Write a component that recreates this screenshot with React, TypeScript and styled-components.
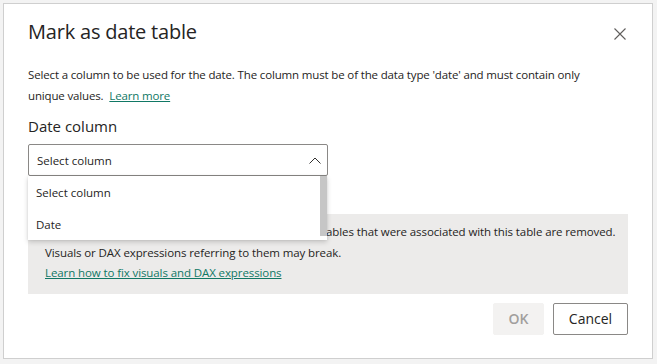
import React from "react";
import styled, { createGlobalStyle } from "styled-components";

const Global = createGlobalStyle`
  html, body { margin: 0; padding: 0; background: #f3f3f3; }
  body { font-family: "Segoe UI", "Open Sans", "Noto Sans", sans-serif; color: #252423; }
  * { box-sizing: border-box; }
`;

const Page = styled.div`
  padding: 3px;
`;

const Dialog = styled.div`
  width: 650px;
  height: 356px;
  background: #ffffff;
  border: 1px solid #cfcfcf;
  padding: 14px 24px 0 24px;
  display: flex;
  flex-direction: column;
`;

const Header = styled.div`
  display: flex;
  align-items: flex-start;
  justify-content: space-between;
`;

const Title = styled.h1`
  margin: 0;
  font-size: 20px;
  line-height: 28px;
  font-weight: 400;
  letter-spacing: -0.2px;
  color: #252423;
`;

const CloseButton = styled.button`
  border: 0;
  background: transparent;
  padding: 0;
  width: 12px;
  height: 12px;
  margin: 10px 2px 0 0;
  display: flex;
  color: #605e5c;
`;

const Description = styled.p`
  margin: 18px 0 0 0;
  font-size: 11.5px;
  letter-spacing: -0.15px;
  line-height: 21px;
  white-space: nowrap;
`;

const Link = styled.a`
  color: #117865;
  text-decoration: underline;
  text-underline-offset: 1px;
  padding-left: 3px;
`;

const Label = styled.div`
  margin-top: 10px;
  font-size: 15px;
  line-height: 20px;
`;

const SelectWrap = styled.div`
  position: relative;
  width: 300px;
  margin-top: 8px;
`;

const SelectBox = styled.div`
  height: 32px;
  border: 1px solid #8a8886;
  border-radius: 2px;
  display: flex;
  align-items: center;
  justify-content: space-between;
  padding: 0 6px 0 8px;
  font-size: 11.5px;
`;

const Dropdown = styled.div`
  position: absolute;
  top: 100%;
  left: 0;
  width: 299px;
  height: 64px;
  background: #ffffff;
  box-shadow: 0 2px 5px rgba(0, 0, 0, 0.18), 0 0 2px rgba(0, 0, 0, 0.08);
  display: flex;
  z-index: 2;
`;

const OptionList = styled.div`
  flex: 1;
  display: flex;
  flex-direction: column;
`;

const Option = styled.div`
  height: 32px;
  display: flex;
  align-items: center;
  padding-left: 8px;
  font-size: 11.5px;
`;

const Scrollbar = styled.div`
  width: 7px;
  height: 60px;
  background: #c6c6c6;
`;

const Warning = styled.div`
  margin-top: 38px;
  background: #ecebea;
  padding: 8px 6px 10px 17px;
  font-size: 11.5px;
  letter-spacing: -0.1px;
  line-height: 20.5px;
  white-space: nowrap;
`;

const WarningLink = styled.a`
  color: #117865;
  text-decoration: underline;
  text-underline-offset: 1px;
`;

const Footer = styled.div`
  margin-top: 9px;
  display: flex;
  justify-content: flex-end;
  gap: 9px;
`;

const Button = styled.button<{ $primary?: boolean }>`
  height: 32px;
  min-width: ${(p) => (p.$primary ? "51px" : "75px")};
  border-radius: 2px;
  font-family: inherit;
  font-size: 14px;
  font-weight: ${(p) => (p.$primary ? 600 : 400)};
  background: ${(p) => (p.$primary ? "#f3f2f1" : "#ffffff")};
  color: ${(p) => (p.$primary ? "#a19f9d" : "#252423")};
  border: ${(p) => (p.$primary ? "1px solid #f3f2f1" : "1px solid #8a8886")};
  padding: 0 12px;
`;

export default function App() {
  return (
    <Page>
      <Global />
      <Dialog>
        <Header>
          <Title>Mark as date table</Title>
          <CloseButton aria-label="Close">
            <svg width="12" height="12" viewBox="0 0 12 12">
              <path d="M0.5 0.5 L11.5 11.5 M11.5 0.5 L0.5 11.5" stroke="currentColor" strokeWidth="1.1" fill="none" />
            </svg>
          </CloseButton>
        </Header>
        <Description>
          Select a column to be used for the date. The column must be of the data type 'date' and must contain only
          <br />
          unique values. <Link>Learn more</Link>
        </Description>
        <Label>Date column</Label>
        <SelectWrap>
          <SelectBox>
            <span>Select column</span>
            <svg width="12" height="7" viewBox="0 0 12 7">
              <path d="M0.5 6.5 L6 1 L11.5 6.5" stroke="#323130" strokeWidth="1" fill="none" />
            </svg>
          </SelectBox>
          <Dropdown>
            <OptionList>
              <Option>Select column</Option>
              <Option>Date</Option>
            </OptionList>
            <Scrollbar />
          </Dropdown>
        </SelectWrap>
        <Warning>
          When you mark this as a date table, the built-in date tables that were associated with this table are removed.
          <br />
          Visuals or DAX expressions referring to them may break.
          <br />
          <WarningLink>Learn how to fix visuals and DAX expressions</WarningLink>
        </Warning>
        <Footer>
          <Button $primary disabled>OK</Button>
          <Button>Cancel</Button>
        </Footer>
      </Dialog>
    </Page>
  );
}
